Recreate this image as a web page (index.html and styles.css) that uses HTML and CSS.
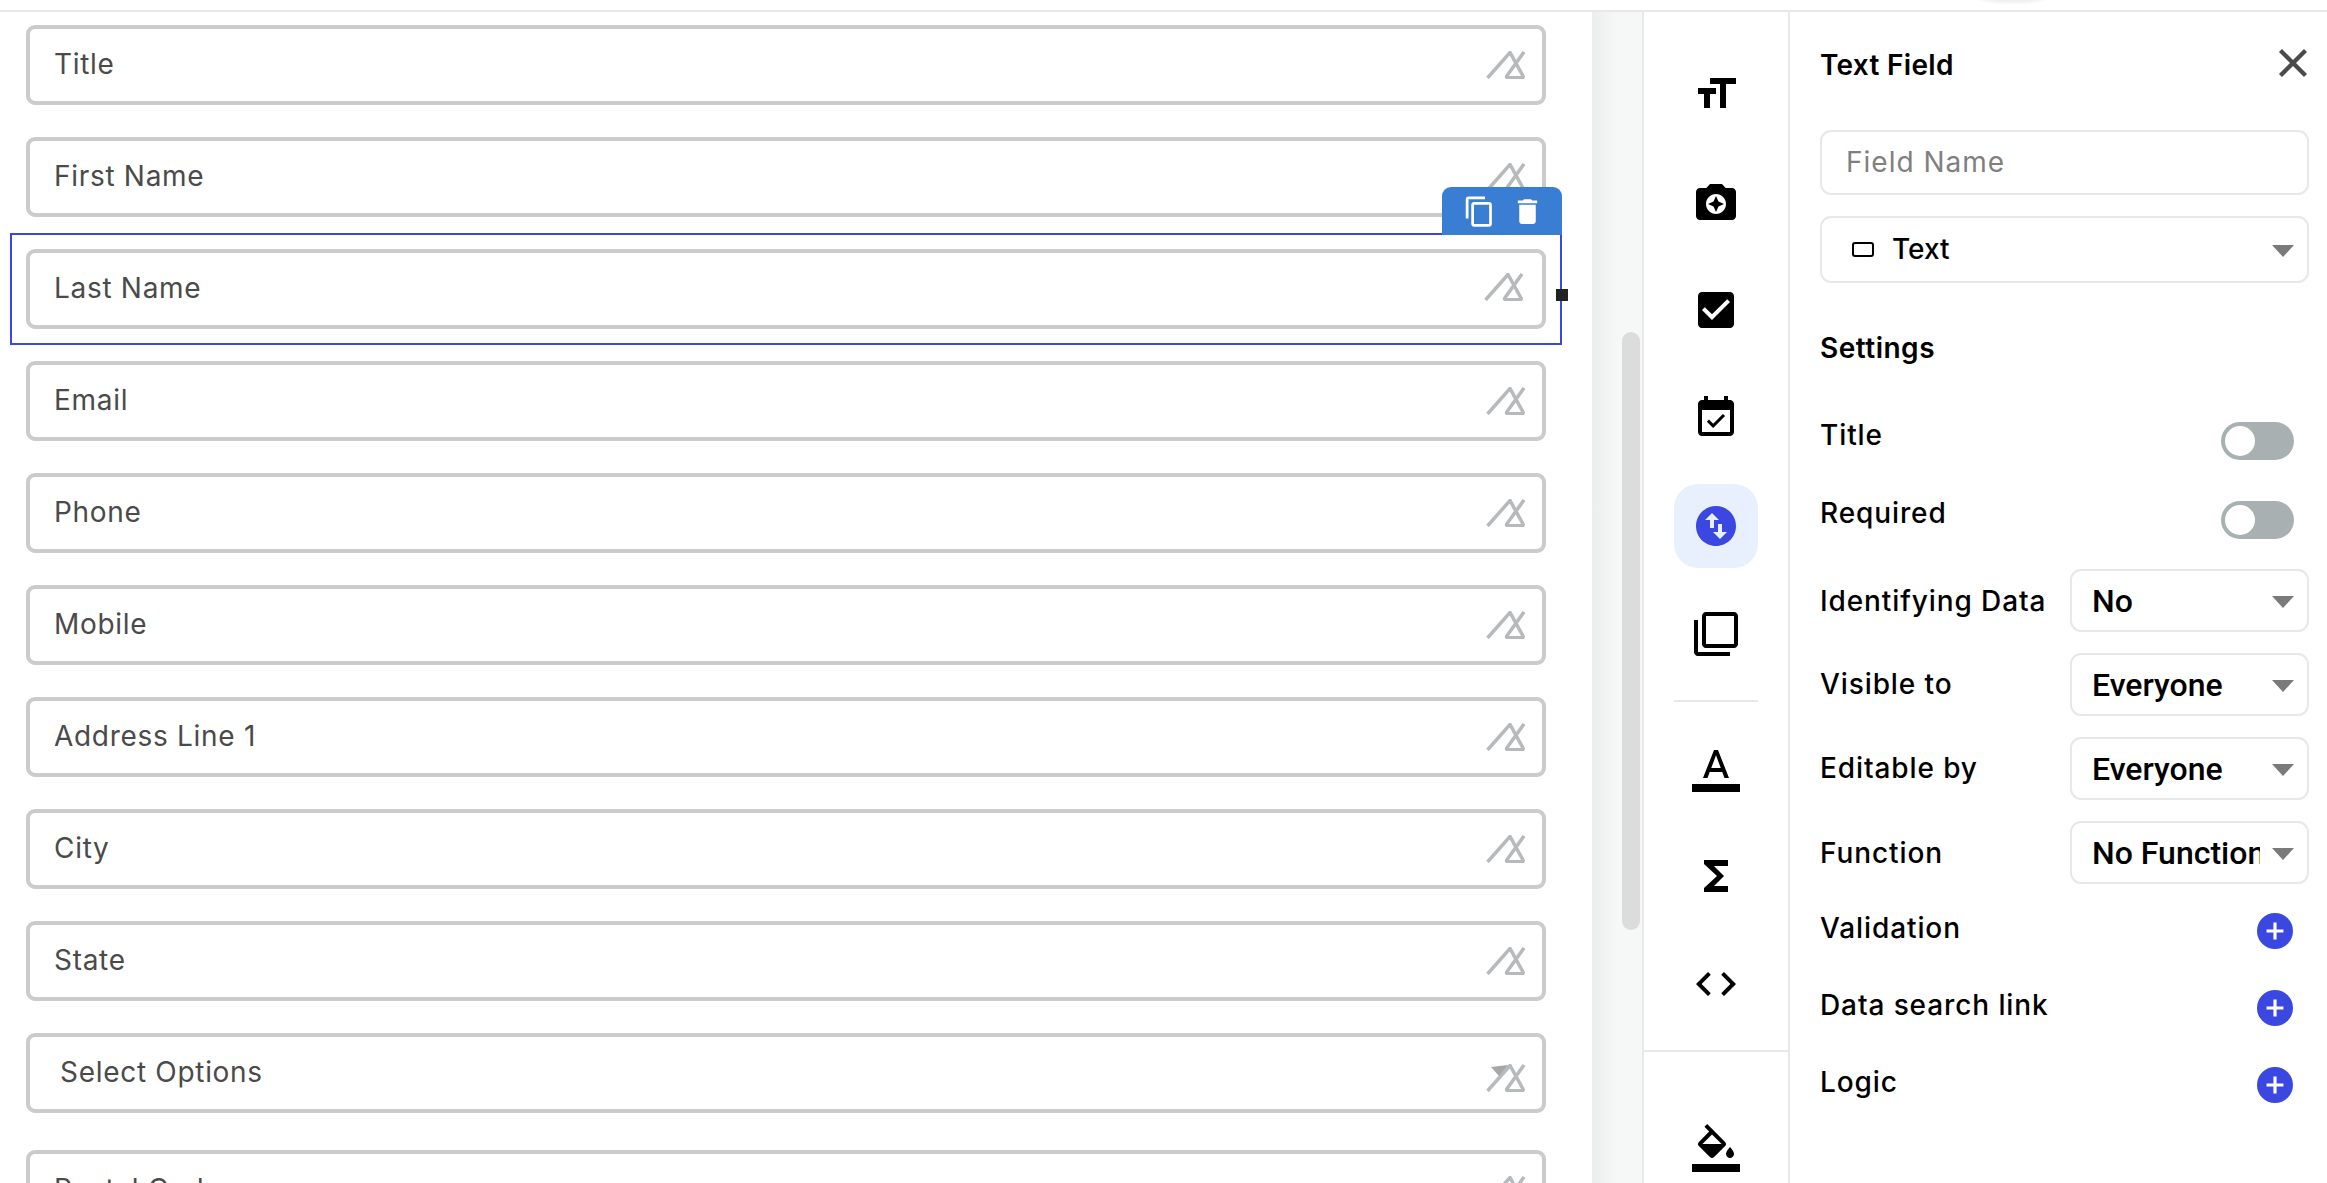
FILE: index.html
```html
<!DOCTYPE html>
<html lang="en">
<head>
<meta charset="utf-8">
<title>Form builder</title>
<link rel="stylesheet" href="styles.css">
</head>
<body>
<svg class="defs" aria-hidden="true">
  <symbol id="no-img" viewBox="0 0 40 28">
    <path d="M1.5 27 24 1.5 37 25c.5 1-.2 1.8-1 1.8H22c-1 0-1.8-.9-1.2-1.8L38 1" fill="none" stroke="currentColor" stroke-width="3.5"/>
  </symbol>
  <symbol id="no-img-arrow" viewBox="0 0 40 28">
    <path d="M1.5 27 24 1.5 37 25c.5 1-.2 1.8-1 1.8H22c-1 0-1.8-.9-1.2-1.8L38 1" fill="none" stroke="currentColor" stroke-width="3.5"/>
    <path d="M5 3 22 1 13 12Z" fill="#a6a6a6"/>
  </symbol>
</svg>
<div class="topstrip"><div class="topglow"></div></div>
<div class="app">
  <main class="canvas">
    <div class="field"><span class="field-name">Title</span><svg class="field-icon"><use href="#no-img"/></svg></div>
    <div class="field"><span class="field-name">First Name</span><svg class="field-icon"><use href="#no-img"/></svg></div>
    <div class="field field-selected">
      <span class="field-name">Last Name</span><svg class="field-icon"><use href="#no-img"/></svg>
      <div class="frame"></div>
      <div class="toolbar">
        <svg class="tool" viewBox="0 0 24 24"><path d="M16 1H4c-1.1 0-2 .9-2 2v14h2V3h12V1zm3 4H8c-1.1 0-2 .9-2 2v14c0 1.1.9 2 2 2h11c1.1 0 2-.9 2-2V7c0-1.1-.9-2-2-2zm0 16H8V7h11v14z"/></svg>
        <svg class="tool" viewBox="0 0 24 24"><path d="M6 19c0 1.1.9 2 2 2h8c1.1 0 2-.9 2-2V7H6v12zM19 4h-3.5l-1-1h-5l-1 1H5v2h14V4z"/></svg>
      </div>
      <div class="handle"></div>
    </div>
    <div class="field"><span class="field-name">Email</span><svg class="field-icon"><use href="#no-img"/></svg></div>
    <div class="field"><span class="field-name">Phone</span><svg class="field-icon"><use href="#no-img"/></svg></div>
    <div class="field"><span class="field-name">Mobile</span><svg class="field-icon"><use href="#no-img"/></svg></div>
    <div class="field"><span class="field-name">Address Line 1</span><svg class="field-icon"><use href="#no-img"/></svg></div>
    <div class="field"><span class="field-name">City</span><svg class="field-icon"><use href="#no-img"/></svg></div>
    <div class="field"><span class="field-name">State</span><svg class="field-icon"><use href="#no-img"/></svg></div>
    <div class="field field-options"><span class="field-name">Select Options</span><svg class="field-icon"><use href="#no-img-arrow"/></svg></div>
    <div class="field"><span class="field-name">Postal Code</span><svg class="field-icon"><use href="#no-img"/></svg></div>
  </main>

  <div class="track"><div class="thumb"></div></div>

  <nav class="rail">
    <div class="rail-top">
      <div class="rail-item"><svg class="rail-icon" viewBox="0 0 24 24"><path d="M9 4v3h5v12h3V7h5V4H9zm-6 8h3v7h3v-7h3V9H3v3z"/></svg></div>
      <div class="rail-item"><svg class="rail-icon" viewBox="0 0 24 24"><path d="M9 3L7.17 5H4c-1.1 0-2 .9-2 2v12c0 1.1.9 2 2 2h16c1.1 0 2-.9 2-2V7c0-1.1-.9-2-2-2h-3.17L15 3H9zm3 15c-2.76 0-5-2.24-5-5s2.24-5 5-5 5 2.24 5 5-2.24 5-5 5zm0-1l1.25-2.75L16 13l-2.75-1.25L12 9l-1.25 2.75L8 13l2.75 1.25z"/></svg></div>
      <div class="rail-item"><svg class="rail-icon" viewBox="0 0 24 24"><path d="M19 3H5c-1.11 0-2 .9-2 2v14c0 1.1.89 2 2 2h14c1.11 0 2-.9 2-2V5c0-1.1-.89-2-2-2zm-9 14l-5-5 1.41-1.41L10 14.17l7.59-7.59L19 8l-9 9z"/></svg></div>
      <div class="rail-item"><svg class="rail-icon" viewBox="0 0 24 24"><path d="M16.53 11.06L15.47 10l-4.88 4.88-2.12-2.12-1.06 1.06L10.59 17l5.94-5.94zM19 3h-1V1h-2v2H8V1H6v2H5c-1.11 0-1.99.9-1.99 2L3 19c0 1.1.89 2 2 2h14c1.1 0 2-.9 2-2V5c0-1.1-.9-2-2-2zm0 16H5V8h14v11z"/></svg></div>
      <div class="rail-item rail-item-active"><svg class="rail-icon" viewBox="0 0 24 24"><path d="M12 2C6.48 2 2 6.48 2 12s4.48 10 10 10 10-4.48 10-10S17.52 2 12 2zM6.5 9L10 5.5 13.5 9H11v4H9V9H6.5zm11 6L14 18.5 10.5 15H13v-4h2v4h2.5z"/></svg></div>
      <div class="rail-item"><svg class="rail-icon" viewBox="0 0 24 24"><path d="M3 5H1v16c0 1.1.9 2 2 2h16v-2H3V5zm18-4H7c-1.1 0-2 .9-2 2v14c0 1.1.9 2 2 2h14c1.1 0 2-.9 2-2V3c0-1.1-.9-2-2-2zm0 16H7V3h14v14z"/></svg></div>
      <div class="rail-divider"></div>
      <div class="rail-item"><svg class="rail-icon" viewBox="0 0 24 24"><path d="M0 20h24v4H0z"/><path d="M11 3L5.5 17h2.25l1.12-3h6.25l1.12 3h2.25L13 3h-2zm-1.38 9L12 5.67 14.38 12H9.62z"/></svg></div>
      <div class="rail-item"><svg class="rail-icon" viewBox="0 0 24 24"><path d="M18 4H6v2l6.5 6L6 18v2h12v-3h-7l5-5-5-5h7z"/></svg></div>
      <div class="rail-item"><svg class="rail-icon" viewBox="0 0 24 24"><path d="M9.4 16.6L4.8 12l4.6-4.6L8 6l-6 6 6 6 1.4-1.4zm5.2 0l4.6-4.6-4.6-4.6L16 6l6 6-6 6-1.4-1.4z"/></svg></div>
    </div>
    <div class="rail-bottom">
      <div class="rail-item"><svg class="rail-icon" viewBox="0 0 24 24"><path d="M16.56 8.94L7.62 0 6.21 1.41l2.38 2.38-5.15 5.15c-.59.59-.59 1.54 0 2.12l5.5 5.5c.29.29.68.44 1.06.44s.77-.15 1.06-.44l5.5-5.5c.59-.58.59-1.53 0-2.12zM5.21 10L10 5.21 14.79 10H5.21zM19 11.5s-2 2.17-2 3.5c0 1.1.9 2 2 2s2-.9 2-2c0-1.33-2-3.5-2-3.5z"/><path d="M0 20h24v4H0z"/></svg></div>
    </div>
  </nav>

  <aside class="panel">
    <div class="panel-head">
      <h2 class="panel-title">Text Field</h2>
      <svg class="close" viewBox="0 0 24 24"><path d="M2 2l20 20M22 2 2 22"/></svg>
    </div>
    <div class="box box-input">Field Name</div>
    <div class="box box-type">
      <span class="type-icon"></span>
      <span class="type-name">Text</span>
      <span class="caret"></span>
    </div>
    <h3 class="settings">Settings</h3>
    <div class="row row-toggle first-toggle"><span class="label label-up">Title</span><span class="toggle"><span class="knob"></span></span></div>
    <div class="row row-toggle second-toggle"><span class="label label-up-more">Required</span><span class="toggle"><span class="knob"></span></span></div>
    <div class="row row-select first-select"><span class="label">Identifying Data</span><div class="box box-select"><span class="value">No</span><span class="caret"></span></div></div>
    <div class="row row-select"><span class="label label-nudge">Visible to</span><div class="box box-select"><span class="value">Everyone</span><span class="caret"></span></div></div>
    <div class="row row-select"><span class="label label-nudge">Editable by</span><div class="box box-select"><span class="value">Everyone</span><span class="caret"></span></div></div>
    <div class="row row-select"><span class="label">Function</span><div class="box box-select"><span class="value">No Function</span><span class="caret"></span></div></div>
    <div class="row row-add first-add"><span class="label label-up-small">Validation</span><svg class="plus" viewBox="0 0 34 34"><circle cx="17" cy="17" r="17"/><path d="M17 9v16M9 17h16"/></svg></div>
    <div class="row row-add"><span class="label label-up-small">Data search link</span><svg class="plus" viewBox="0 0 34 34"><circle cx="17" cy="17" r="17"/><path d="M17 9v16M9 17h16"/></svg></div>
    <div class="row row-add"><span class="label label-up-small">Logic</span><svg class="plus" viewBox="0 0 34 34"><circle cx="17" cy="17" r="17"/><path d="M17 9v16M9 17h16"/></svg></div>
  </aside>
</div>
</body>
</html>
```
FILE: styles.css
```css
* { box-sizing: border-box; }
html, body { margin: 0; height: 100%; overflow: hidden; background: #fff; }
body { font-family: Inter, "Noto Sans", "Liberation Sans", sans-serif; color: #000; display: flex; flex-direction: column; }
.defs { position: absolute; width: 0; height: 0; }

.topstrip { flex: none; height: 12px; border-bottom: 2px solid #e8e8e8; position: relative; overflow: hidden; }
.topglow { position: absolute; left: 1980px; top: -6px; width: 64px; height: 9px; border-radius: 50%; background: #f0f0f0; filter: blur(1px); }

.app { flex: 1; min-height: 0; display: flex; overflow: hidden; }

.canvas { flex: none; width: 1592px; padding: 13px 0 0 26px; overflow: hidden; }
.field { width: 1520px; height: 80px; margin-bottom: 32px; border: 4px solid #cbcbcb; border-radius: 9px; background: #fff; display: flex; align-items: center; justify-content: space-between; padding: 0 16px 0 24px; position: relative; }
.field-name { font-size: 28px; letter-spacing: 0.7px; color: #4a4a4a; margin-bottom: 2px; }
.field-icon { width: 40px; height: 28px; color: #b6babc; flex: none; }
.field-selected { padding-right: 18px; }
.field-selected .field-icon { margin-bottom: 4px; }
.field-options { margin-bottom: 37px; padding-left: 30px; }
.field-options .field-icon { margin-top: 10px; }

.frame { position: absolute; inset: -20px; border: 2px solid #3a47e0; pointer-events: none; }
.toolbar { position: absolute; right: -20px; top: -66px; width: 120px; height: 48px; background: #3a7ed4; border-radius: 9px 9px 0 0; display: flex; align-items: flex-start; gap: 15px; padding: 8px 0 0 21px; }
.tool { width: 33px; height: 33px; fill: #fff; }
.handle { position: absolute; right: -26px; top: 36px; width: 12px; height: 12px; background: #222; }

.track { flex: none; width: 50px; padding: 320px 2px 0 30px; background: linear-gradient(90deg, #eceeee, #f6f8f8 50%); }
.thumb { height: 598px; border-radius: 9px; background: #dcdcdc; }

.rail { flex: none; width: 148px; border-left: 2px solid #e8e8e8; border-right: 2px solid #e8e8e8; display: flex; flex-direction: column; }
.rail-top { padding: 40px 0 24px; display: flex; flex-direction: column; align-items: center; gap: 24px; border-bottom: 2px solid #e8e8e8; }
.rail-bottom { padding-top: 54px; display: flex; justify-content: center; }
.rail-item { width: 84px; height: 84px; border-radius: 24px; display: flex; align-items: center; justify-content: center; flex: none; }
.rail-item-active { background: #e9f0fd; }
.rail-item-active .rail-icon { fill: #3a47e0; }
.rail-icon { width: 48px; height: 48px; fill: #000; }
.rail-divider { width: 84px; height: 2px; background: #e8e8e8; flex: none; }

.panel { flex: 1; min-width: 0; padding: 32px 18px 0 30px; display: flex; flex-direction: column; }
.panel-head { height: 40px; display: flex; align-items: center; justify-content: space-between; padding-right: 1px; }
.panel-title { margin: 2px 0 0; font-size: 28px; font-weight: 600; letter-spacing: 0.3px; line-height: 40px; }
.close { width: 30px; height: 30px; fill: none; stroke: #4a4a4a; stroke-width: 3.4; margin-bottom: 2px; }

.box { border: 2px solid #e8e8e8; border-radius: 11px; display: flex; align-items: center; background: #fff; }
.box-input { margin-top: 46px; height: 65px; padding: 0 0 2px 24px; font-size: 28px; letter-spacing: 1px; color: #7f7f7f; }
.box-type { margin-top: 21px; height: 67px; padding: 0 13px 0 30px; }
.type-icon { width: 22px; height: 15px; border: 2.5px solid #000; border-radius: 3px; flex: none; }
.type-name { flex: 1; margin: -2px 0 0 18px; font-size: 28px; font-weight: 500; }
.caret { flex: none; width: 0; height: 0; margin-top: 3px; border-left: 11.5px solid transparent; border-right: 11.5px solid transparent; border-top: 12px solid #7a7a7a; }

.settings { margin: 45px 0 0; font-size: 28px; font-weight: 600; letter-spacing: 0.5px; line-height: 40px; }

.row { display: flex; align-items: center; justify-content: space-between; }
.label { font-size: 28px; letter-spacing: 0.9px; font-weight: 500; white-space: nowrap; }
.label-up { margin-bottom: 13px; }
.label-up-more { margin-bottom: 15px; }
.label-up-small { margin-bottom: 7px; }
.label-nudge { margin-bottom: 2px; }

.row-toggle { height: 38px; padding-right: 15px; }
.first-toggle { margin-top: 54px; }
.second-toggle { margin-top: 41px; }
.toggle { width: 73px; height: 38px; border-radius: 19px; background: #a9b0b2; padding: 4px; flex: none; }
.knob { display: block; width: 30px; height: 30px; border-radius: 50%; background: #fff; }

.row-select { height: 63px; margin-top: 21px; }
.first-select { margin-top: 30px; }
.box-select { width: 239px; height: 63px; padding: 0 13px 0 20px; flex: none; }
.value { flex: 1; min-width: 0; overflow: hidden; white-space: nowrap; font-family: Roboto, "Liberation Sans", sans-serif; font-size: 32px; font-weight: 500; }
.box-select .caret { margin-left: 12px; }

.row-add { height: 36px; margin-top: 41px; padding-right: 16px; }
.first-add { margin-top: 29px; }
.plus { width: 36px; height: 36px; flex: none; }
.plus circle { fill: #3a47e0; }
.plus path { stroke: #fff; stroke-width: 3; fill: none; }
```
